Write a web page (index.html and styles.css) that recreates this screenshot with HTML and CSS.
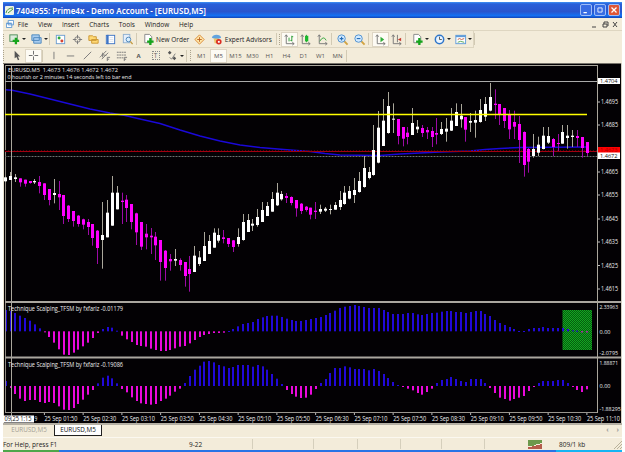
FILE: index.html
```
<!DOCTYPE html>
<html lang="en">
<head>
    <meta charset="UTF-8">
    <title>Prime4x - EURUSD,M5</title>
    <link rel="stylesheet" href="styles.css">
</head>
<body>
    <div class="window">
        <div class="titlebar">
            <svg class="app_icon" viewBox="0 0 9 9"><rect width="9" height="9" rx="1" fill="#eef3e6"/><path d="M1 7Q2 2 8 2M3 7L8 3" stroke="#4d9a43" fill="none"/></svg>
            <span class="title">7404955: Prime4x - Demo Account - [EURUSD,M5]</span>
            <div class="win_btns">
                <svg viewBox="0 0 12 12"><path d="M3 9H7" stroke="#fff" stroke-width="1.5"/></svg>
                <svg viewBox="0 0 12 12"><path d="M3.5 3.5H8.5V8.5H3.5Z" stroke="#fff" fill="none"/></svg>
                <svg class="close" viewBox="0 0 12 12"><path d="M3 3L9 9M9 3L3 9" stroke="#fff" stroke-width="1.5"/></svg>
            </div>
        </div>

        <div class="menubar">
            <svg class="menu_icon" viewBox="0 0 9 9"><path d="M2.5 .5H8.500V5.500H2.500ZM.5 3.500H6.500V8.500H.5Z" fill="#fff" stroke="#5b96d2"/><path d="M1 4H6" stroke="#5b96d2"/></svg>
            <span>File</span><span>View</span><span>Insert</span><span>Charts</span><span>Tools</span><span>Window</span><span>Help</span>
            <svg class="mdi" viewBox="0 0 30 9"><path d="M2 7H6M13 4H17V7H13ZM14 4V2H18V6M23 2L27 7M27 2L23 7" fill="none" stroke="#444"/></svg>
        </div>

        <div class="toolbar main_tools">
            <i class="grip"></i>
            <div class="btn dd"><svg viewBox="0 0 14 14"><rect x="2" y="2" width="8" height="7" fill="#dcebdc" stroke="#4d8d57"/><path d="M8.500 5V12M5 8.500H12" stroke="#16a51c" stroke-width="2.500"/></svg></div>
            <div class="btn dd"><svg viewBox="0 0 14 14"><path d="M2 2H10V8H2ZM4 5H12V11H4Z" fill="#a9cdf0" stroke="#4d87bd"/></svg></div>
            <i class="sep"></i>
            <div class="btn"><svg viewBox="0 0 14 14"><rect x="2.500" y="2.500" width="9" height="9" fill="#fff" stroke="#6d9ed0"/><circle cx="5.500" cy="5.500" r="1.600" fill="#2ea73a"/><circle cx="8.500" cy="8.500" r="1.600" fill="#d64432"/></svg></div>
            <div class="btn"><svg viewBox="0 0 14 14"><circle cx="7" cy="7" r="3" fill="none" stroke="#777"/><path d="M7 2V6M7 8V12M2 7H6M8 7H12" stroke="#777"/></svg></div>
            <div class="btn"><svg viewBox="0 0 14 14"><path d="M2 3H6L7 4H10V8H2ZM5 7H12V11H5Z" fill="#ffd974" stroke="#cb9733"/></svg></div>
            <div class="btn"><svg viewBox="0 0 14 14"><rect x="2.500" y="2.500" width="9" height="9" fill="#fff" stroke="#3f75c5"/><path d="M4 2V12" stroke="#3f75c5" stroke-width="2"/><path d="M6 5H10M6 7H10M6 9H10" stroke="#c9d4e4" stroke-width=".7"/></svg></div>
            <div class="btn"><svg viewBox="0 0 14 14"><rect x="2.500" y="1.500" width="7" height="9" fill="#e4eefa" stroke="#8fafd0"/><circle cx="8" cy="7" r="2.500" fill="#d9efff" stroke="#4c85b9"/><path d="M10 9L12.500 12" stroke="#c39a41" stroke-width="1.500"/></svg></div>
            <i class="sep wide"></i>
            <div class="btn order"><svg viewBox="0 0 14 14"><path d="M3 1.500H8L10.500 4V10.500H3Z" fill="#fff" stroke="#888"/><path d="M9 5.500V13M5.500 9.200H12.500" stroke="#16a51c" stroke-width="2.500"/></svg><span>New Order</span></div>
            <div class="btn"><svg viewBox="0 0 14 14"><path d="M7 2L12 7L7 12L2 7Z" fill="#ffe6a7" stroke="#d98938"/><path d="M7 4.500V9.500M4.500 7H9.500" stroke="#bd6525"/></svg></div>
            <div class="btn expert"><svg viewBox="0 0 14 14"><path d="M2 5Q3 2 7 2T12 5L7 7Z" fill="#62a4df"/><path d="M4 6H9L8 11H5Z" fill="#edc66c"/><circle cx="9.500" cy="9.500" r="3" fill="#dc2e23"/><rect x="8.500" y="8.500" width="2" height="2" fill="#fff"/></svg><span>Expert Advisors</span></div>
            <i class="sep"></i><i class="grip narrow"></i>
            <div class="btn pressed"><svg viewBox="0 0 14 14"><path d="M3.500 2V11.500H12M2 4L3.500 2L5 4M10 10L12 11.500L10 13" fill="none" stroke="#777"/><path d="M6.500 5V9M9.500 3V9M9.500 4H11M8 8H9.500" stroke="#269b31"/></svg></div>
            <div class="btn"><svg viewBox="0 0 14 14"><path d="M3.500 2V11.500H12M2 4L3.500 2L5 4M10 10L12 11.500L10 13" fill="none" stroke="#777"/><path d="M8 2V10" stroke="#269b31"/><rect x="6.500" y="3" width="3.500" height="6" fill="#19b82b"/></svg></div>
            <div class="btn"><svg viewBox="0 0 14 14"><path d="M3.500 2V11.500H12M2 4L3.500 2L5 4M10 10L12 11.500L10 13" fill="none" stroke="#777"/><path d="M4 9Q8 2 11 8" fill="none" stroke="#35a83e"/></svg></div>
            <i class="sep"></i>
            <div class="btn"><svg viewBox="0 0 14 14"><path d="M8 8L12.500 12.500" stroke="#d2a341" stroke-width="2"/><circle cx="6" cy="6" r="4" fill="#d2eaff" stroke="#4d8fce"/><path d="M4 6H8M6 4V8" stroke="#276fb8" stroke-width="1.200"/></svg></div>
            <div class="btn"><svg viewBox="0 0 14 14"><path d="M8 8L12.500 12.500" stroke="#d2a341" stroke-width="2"/><circle cx="6" cy="6" r="4" fill="#d2eaff" stroke="#4d8fce"/><path d="M4 6H8" stroke="#276fb8" stroke-width="1.200"/></svg></div>
            <i class="sep wide"></i>
            <div class="btn pressed"><svg viewBox="0 0 14 14"><path d="M3.500 2V11.500H12M2 4L3.500 2L5 4M10 10L12 11.500L10 13" fill="none" stroke="#777"/><path d="M7 4L11 7L7 10Z" fill="#2fad38"/></svg></div>
            <div class="btn"><svg viewBox="0 0 14 14"><path d="M3.500 2V11.500H12M2 4L3.500 2L5 4M10 10L12 11.500L10 13M8 2V10" fill="none" stroke="#777"/><path d="M12 5L8.500 7L12 9Z" fill="#c73b2e"/></svg></div>
            <i class="sep wide"></i>
            <div class="btn dd"><svg viewBox="0 0 14 14"><path d="M3 1.500H8L10.500 4V10.500H3Z" fill="#fff" stroke="#888"/><path d="M9 5.500V13M5.500 9.200H12.500" stroke="#16a51c" stroke-width="2.500"/></svg></div>
            <div class="btn dd"><svg viewBox="0 0 14 14"><circle cx="7" cy="7" r="4.500" fill="#eaf5ff" stroke="#2f76ca" stroke-width="1.600"/><path d="M7 4V7H9.500" fill="none" stroke="#555"/></svg></div>
            <div class="btn dd"><svg viewBox="0 0 14 14"><rect x="2" y="2.500" width="10.500" height="9" fill="#fff" stroke="#5f9bd8"/><path d="M2 3.500H12.500" stroke="#5f9bd8" stroke-width="2"/><path d="M4 7L6 6L8 7L11 6" fill="none" stroke="#c0593e"/><path d="M4 10L7 9L11 10" fill="none" stroke="#55a653"/></svg></div>
            <i class="sep"></i>
        </div>

        <div class="toolbar line_tools">
            <i class="grip first"></i>
            <div class="btn"><svg viewBox="0 0 14 14"><path d="M5 2V10L7 8.500L8.500 12L10 11.500L8.500 8H11Z" fill="#555"/></svg></div>
            <div class="btn pressed"><svg viewBox="0 0 14 14"><path d="M7 2V6M7 8V12M2 7H6M8 7H12" stroke="#666"/></svg></div>
            <i class="sep"></i>
            <div class="btn"><svg viewBox="0 0 14 14"><path d="M7.500 3V11" stroke="#777"/></svg></div>
            <div class="btn"><svg viewBox="0 0 14 14"><path d="M3 7.500H11" stroke="#777"/></svg></div>
            <div class="btn"><svg viewBox="0 0 14 14"><path d="M3 11L11 3" stroke="#777"/></svg></div>
            <div class="btn"><svg viewBox="0 0 14 14"><path d="M2 9L9 2M4 11L11 4M4 6L9 7M5 4V9M10 9V13M10 9H13M10 11H12" fill="none" stroke="#777"/></svg></div>
            <div class="btn"><svg viewBox="0 0 14 14"><path d="M2 3.500H12M2 6.500H12M2 9.500H9" stroke="#777" stroke-dasharray="2 .6"/><path d="M10 13V9H13M10 11H12" fill="none" stroke="#777"/></svg></div>
            <div class="btn letter">A</div>
            <div class="btn"><div class="text_label">T</div></div>
            <div class="btn dd"><svg viewBox="0 0 14 14"><path d="M2 4L4 2L6 4L4 6ZM7 10L9 8L11 10L9 12Z" fill="#555"/><path d="M4 9L6 11L10 5" fill="none" stroke="#777"/></svg></div>
            <i class="sep wide"></i><i class="grip"></i>
            <div class="btn tf">M1</div><div class="btn tf pressed">M5</div><div class="btn tf">M15</div><div class="btn tf">M30</div><div class="btn tf">H1</div><div class="btn tf">H4</div><div class="btn tf">D1</div><div class="btn tf">W1</div><div class="btn tf">MN</div>
            <i class="sep"></i>
        </div>

        <svg class="chart" id="chart" viewBox="3 63 619 362">
            <defs>
                <pattern id="green_dots" width="2" height="2" patternUnits="userSpaceOnUse">
                    <rect width="2" height="2" fill="#055c0e"/><path d="M0 0H1V1H0ZM1 1H2V2H1Z" fill="#13a522"/>
                </pattern>
            </defs>
            <g id="bars"></g>
            <g id="lines"></g>
            <g id="labels"></g>
        </svg>

        <div class="tabs">
            <span class="tab">EURUSD,M5</span>
            <span class="tab active">EURUSD,M5</span>
            <span class="arrows"><b>‹</b><b>›</b></span>
        </div>

        <div class="status">
            <span class="help">For Help, press F1</span>
            <span class="profile">9-22</span>
            <span class="cell c1"></span><span class="cell c2"></span><span class="cell c3"></span><span class="cell c4"></span><span class="cell c5"></span><span class="cell c6"></span>
            <svg class="signal" viewBox="0 0 15 9"><path d="M1 0V6M3 0V6M5 0V6M7 0V5M9 0V4M11 0V4M13 0V3" stroke="#3f7d1c" stroke-width="1.500"/><path d="M1 7V9M3 7V9M5 6V9M7 6V9M9 5V9M11 5V9M13 4V9" stroke="#a02c1c" stroke-width="1.500"/></svg>
            <span class="traffic">809/1 kb</span>
            <svg class="resize" viewBox="0 0 9 9"><path d="M1 9L9 1M4 9L9 4M7 9L9 7" stroke="#b9b29a"/></svg>
        </div>
    </div>
    <div class="taskbar"><i class="start"></i><i class="tasks"></i><i class="tray"></i></div>

    <script src="chart.js"></script>
</body>
</html>
```
FILE: styles.css
```
* {
    margin: 0;
    padding: 0;
    box-sizing: border-box;
}

body {
    width: 625px;
    height: 452px;
    overflow: hidden;
    padding: 2px 3px 0;
    background-color: #fff;
    font-family: "Open Sans", "Noto Sans", sans-serif;
    font-size: 6.5px;
    color: #222;
}

.window {
    width: 619px;
    height: 448px;
    background-color: #f3ecda;
}

.titlebar {
    height: 16px;
    display: flex;
    align-items: center;
    padding: 0 2px;
    background: linear-gradient(#3f93f5 0, #2a5fd9 12%, #2955cd 60%, #1470f2 85%, #1244b8 100%);
}

.app_icon {
    width: 9px;
    height: 9px;
}

.title {
    margin-left: 2px;
    font-family: "Noto Sans", sans-serif;
    font-size: 8px;
    font-weight: 600;
    color: #fff;
    white-space: nowrap;
}

.win_btns {
    margin-left: auto;
    display: flex;
    gap: 2px;
}

.win_btns svg {
    width: 12px;
    height: 12px;
    border: 1px solid #9dbdf8;
    border-radius: 2px;
    background-color: #386ce3;
}

.win_btns .close {
    background-color: #de5637;
}

.menubar {
    height: 13px;
    display: flex;
    align-items: center;
    gap: 9.8px;
    padding: 0 2px 0 3px;
    border-bottom: 1px solid #ded6c1;
}

.menu_icon {
    width: 8px;
    height: 8px;
    margin-right: -6px;
}

.mdi {
    width: 30px;
    height: 9px;
    margin-left: auto;
}

.toolbar {
    display: flex;
    align-items: center;
    border-bottom: 1px solid #ddd5c0;
}

.main_tools {
    height: 17px;
    width: 471px;
    border-right: 1px solid #ddd5c0;
}

.line_tools {
    height: 15px;
    width: 344px;
    border: none;
}

.grip {
    flex: none;
    width: 3px;
    height: 11px;
    border-left: 1px dotted #aaa28c;
}

.grip.narrow {
    width: 2px;
}

.grip.first {
    width: 5px;
}

.sep {
    flex: none;
    width: 3px;
    height: 12px;
    border-left: 1px solid #d2cab4;
}

.sep.wide {
    width: 4px;
}

.btn {
    flex: none;
    display: flex;
    align-items: center;
    justify-content: center;
    width: 16.8px;
    height: 15px;
    white-space: nowrap;
}

.btn svg {
    flex: none;
    width: 13px;
    height: 13px;
}

.btn.dd {
    width: 21.5px;
    justify-content: flex-start;
    padding-left: 2px;
}

.btn.dd::after {
    content: "";
    margin-left: 1px;
    border: 2px solid transparent;
    border-top-color: #222;
    border-bottom: none;
}

.btn.pressed {
    background-color: #fdfbf4;
    border: 1px solid #ded6c4;
}

.btn.order {
    width: 51px;
    justify-content: flex-start;
    padding-left: 2px;
    gap: 1px;
}

.btn.expert {
    width: 68px;
    justify-content: flex-start;
    padding-left: 2px;
    gap: 2px;
}

.line_tools .btn {
    width: 17px;
    height: 14px;
}

.line_tools .btn.dd {
    width: 22px;
}

.btn.tf,
.btn.letter {
    font-size: 6px;
    color: #555;
}

.btn.letter {
    font-weight: bold;
}

.text_label {
    width: 8px;
    height: 9px;
    line-height: 7px;
    text-align: center;
    border: 1px dotted #888;
    color: #666;
}

.chart {
    display: block;
    width: 619px;
    height: 362px;
    background-color: #030104;
    font-family: "Open Sans", "Noto Sans", sans-serif;
}

.tabs {
    height: 13px;
    display: flex;
    padding-left: 1px;
    border-bottom: 1px solid #fbf8f0;
}

.tab {
    width: 50px;
    height: 11px;
    line-height: 10px;
    text-align: center;
    font-size: 6.3px;
    color: #a39f94;
}

.tab.active {
    width: 48px;
    background-color: #fff;
    border: 1px solid #222;
    border-top: none;
    color: #111;
}

.arrows {
    margin-left: auto;
    display: flex;
    gap: 8px;
    padding-right: 3px;
    line-height: 9px;
    color: #999;
}

.status {
    height: 12px;
    display: flex;
    align-items: center;
}

.help {
    width: 184px;
}

.profile {
    width: 65px;
    padding-left: 2px;
}

.cell {
    height: 10px;
    border-left: 1px solid #d5cfbc;
}

.c1 { width: 61px; }
.c2 { width: 44px; }
.c3 { width: 43px; }
.c4 { width: 41px; }
.c5 { width: 43px; }
.c6 { width: 40px; }

.signal {
    width: 15px;
    height: 9px;
    margin: 0 0 0 4px;
}

.traffic {
    margin-left: 16px;
}

.resize {
    width: 9px;
    height: 9px;
    margin-left: auto;
}

.taskbar {
    display: flex;
    width: 619px;
    height: 2px;
}

.start {
    width: 56px;
    background-color: #4fa64a;
}

.tasks {
    width: 497px;
    background-color: #2873e6;
}

.tray {
    flex: 1;
    background-color: #16b4f3;
}
```
FILE: chart.js
```
// candles: high low bodyTop bodyBottom, in thirds of a pixel below the block's base
// a leading "w" is a rising bar, "m" a falling one
let blocks = [
    { base: 80, rows: `w290 306 292 304,w276 300 288 300,w282 306 292 297,m295 320 295 307,m299 320 299 311,m303 311 303 309,w297 312 303 307,m288 340 306 318,m310 360 310 345,m327 376 327 360,w297 370 339 345,m303 390 342 352,m345 432 345 408,m375 426 377 417,m393 440 393 423,m405 440 407 432,m416 448 418 434,m417 465 426 441,m432 497 432 474,m450 552 452 504,w366 566 465 480,w360 472 398 472,w288 437 338 437,w318 388 338 388,m338 432 362 366,m345 426 359 384,m372 448 372 426,m398 495 400 457,m426 510 426 500,m432 508 461 472,m444 522 467 472,m456 540 470 496` },
    { base: 160, rows: `m240 362 240 306,m270 362 272 324,m282 332 297 304,w267 318 297 302,m295 332 300 315,m306 380 306 348,m288 395 327 342,w258 336 287 336,w273 318 292 312,w216 303 258 303,w225 282 243 282,w205 263 218 263,w205 248 225 242,m210 250 232 237,m234 261 234 252,m240 276 241 261,w205 260 231 252,w162 242 186 240,w162 216 180 216,w177 213 191 197,w147 200 171 195,w126 186 150 186,w126 168 138 168,w96 155 117 155,w69 138 98 136,w93 122 102 118,m99 129 108 114,m109 136 111 129,m120 170 120 145,m129 162 131 153,m138 155 140 150,m143 178 143 164` },
    { base: 75, rows: `m381 432 407 411,w389 417 402 410,w396 411 401 407,w389 418 402 405,w381 404 390 404,w348 405 375 396,w333 389 353 387,w333 373 348 371,w309 384 345 360,w291 353 318 351,w243 338 279 336,w276 313 291 309,w150 302 225 300,w108 265 158 263,w72 213 137 213,w51 176 93 174,w85 174 131 134,m132 208 132 183,m156 214 156 191,m156 208 173 186,w99 180 144 180,w135 174 155 163,m150 186 159 174,m156 192 165 172,m156 216 168 186,m129 208 174 179,w141 180 162 177,w129 200 161 170,w99 168 137 167,w85 153 111 153,w87 158 122 133,m126 200 126 164` },
    { base: 70, rows: `w129 186 153 158,w122 203 150 158,w87 158 120 156,w81 153 102 140,w39 124 81 122,m58 147 101 105,m102 165 102 135,m114 174 114 153,m120 207 134 178,m122 207 156 170,m138 279 162 210,m184 320 186 285,m234 308 237 275,w192 263 237 258,w200 258 224 248,w171 238 197 237,w171 222 198 218,m204 258 207 231,m192 243 219 222,w165 221 186 221,w165 236 197 204,w180 231 197 201,m180 231 198 204,m201 263 201 234,m216 258 216 249` }
];

// histogram ends, thirds of a pixel below 295
let upper = [45,48,54,62,69,77,88,100,112,126,143,163,179,180,173,164,154,143,129,114,102,96,98,107,122,133,141,150,153,155,161,165,168,168,165,160,155,153,145,135,126,120,117,114,114,113,108,102,94,87,84,81,72,67,63,62,62,66,71,75,78,78,75,72,69,66,60,54,47,39,35,33,30,33,36,39,39,39,45,51,57,57,57,54,54,58,60,57,54,53,50,48,48,51,51,54,51,48,48,57,63,75,84,90,96,102,108,108,102,99,99,96,99,99,99,99,102,106,107,112,112];
let lower = [258,279,297,311,318,315,315,321,324,321,324,334,344,345,339,327,314,299,285,265,248,242,250,265,282,292,307,318,325,327,329,327,318,311,302,290,281,264,243,224,212,200,198,202,210,214,219,216,210,210,210,215,210,214,224,237,251,267,285,297,305,309,308,299,282,264,252,234,219,219,214,217,222,222,222,226,222,228,237,249,261,270,276,281,286,294,299,291,281,264,255,252,246,252,258,261,252,252,252,264,279,294,308,312,317,312,308,303,288,276,264,258,258,258,255,255,264,276,285,291,283];

let bars_el = document.getElementById("bars");
let lines_el = document.getElementById("lines");
let labels_el = document.getElementById("labels");

function barX(i) {
    return 5.8 + 4.844 * i;
}

function rect(x, y, w, h, fill) {
    return `<rect x="${x.toFixed(2)}" y="${y.toFixed(2)}" width="${w}" height="${h.toFixed(2)}" fill="${fill}"/>`;
}

function line(x1, y1, x2, y2, color, extra = "") {
    return `<path d="M${x1} ${y1}L${x2} ${y2}" stroke="${color}" fill="none" ${extra}/>`;
}

function text(x, y, value, width, color = "#ececec", size = 6.3) {
    return `<text x="${x}" y="${y}" font-size="${size}" fill="${color}" textLength="${width}" lengthAdjust="spacingAndGlyphs">${value}</text>`;
}

function drawCandles() {
    let out = "";
    let i = 0;
    blocks.forEach(block => {
        block.rows.split(",").forEach(row => {
            let up = row[0] === "w";
            let [high, low, top, bottom] = row.slice(1).split(" ").map(v => block.base + v / 3);
            let x = Math.round(barX(i) - 0.5);
            out += rect(x, high, 1, low - high, up ? "#aaa79b" : "#9c0aa5");
            out += rect(x - 1, top, 3, Math.max(bottom - top, 1), up ? "#fff" : "#f0f");
            i++;
        });
    });
    return out;
}

function drawHistogram(data, zero) {
    return data.map((v, i) => {
        let x = Math.round(barX(i) - 1);
        let top = 295 + Math.min(v, zero) / 3;
        return rect(x, top, 2, Math.max(Math.abs(v - zero) / 3, 1), v > zero ? "#ea08dc" : "#2108d8");
    }).join("");
}

let lines = "";
lines += line(5, 65.5, 598, 65.5, "#aaa69c");
lines += line(5.5, 65, 5.5, 413, "#8f8980");
lines += line(5, 81.5, 598, 81.5, "#aaa");
lines += `<path d="M6 89.700L12 90.300L30 94L50 99L70 104L90 109L110 113L125 115.500L140 119L160 123.500L180 130L200 136L220 141L240 145L260 147.500L290 150L310 151.500L325 153.500L340 155L380 155.500L400 154L420 153L440 152L470 151L485 149.500L500 148.500L520 147.500L587 147" fill="none" stroke="#1a08d8" stroke-width="1.500"/>`;
lines += line(5, 151.5, 598, 151.5, "#a00010");
lines += line(5, 150.5, 598, 150.5, "#550008", 'stroke-dasharray="1 2"');
lines += line(5, 156.5, 598, 156.5, "#6b7370", 'stroke-dasharray="1 .5"');
lines += line(11.5, 65, 11.5, 416, "#aaa69c");
[302, 357.5].forEach(y => lines += line(5, y, 621, y, "#aaa69f", 'stroke-width="2"'));
lines += line(5, 412.5, 598, 412.5, "#99958e");
lines += line(597.5, 65, 597.5, 413, "#aaa69c");
lines += line(3.5, 63, 3.5, 425, "#e6dfcd");
lines += line(3, 63.5, 622, 63.5, "#77736b");
lines += line(621.5, 63, 621.5, 425, "#d5d0c3");
lines += line(3, 424, 622, 424, "#b5b0a4", 'stroke-width="2"');

let labels = "";
labels += text(8, 72.3, "EURUSD,M5&#160; 1.4673 1.4676 1.4672 1.4672", 110, "#ececec", 5.8);
labels += text(7.5, 79.3, "0 hourish or 2 minutes 14 seconds left to bar end", 124, "#ececec", 5.8);
labels += text(8, 311.3, "Technique Scalping_TFSM by fxfariz -0.01179", 115);
labels += text(8, 367, "Technique Scalping_TFSM by fxfariz -0.19086", 115);
[[1.4695, 102], [1.4685, 125], [1.4665, 172], [1.4655, 195], [1.4645, 219], [1.4635, 242], [1.4625, 265.5], [1.4615, 289]].forEach(([price, y]) => {
    labels += line(598, y, 600, y, "#bbb") + text(601, y + 2.3, price, 17);
});
[["2.33963", 309], ["0.00", 333.7], ["-2.0795", 355.3], ["1.88871", 365.3], ["0.00", 388.3], ["-1.88295", 411]].forEach(([value, y]) => {
    labels += text(599.5, y, value, value.length > 4 ? value.length * 2.65 : 11, "#ececec", 5.8);
});
labels += rect(598, 78, 22, 6, "#fff") + text(600, 83.2, "1.4704", 17.5, "#111", 6);
labels += rect(598, 147, 22, 6, "#f00") + text(600, 152, "1.4673", 17.5, "#a00", 5.4);
labels += rect(598, 152.5, 22, 6.5, "#fff") + text(600, 158, "1.4672", 17.5, "#111", 6);

for (let i = 0; i < 15; i++) {
    let x = 44.4 + 38.75 * i;
    let minutes = 110 + 40 * i;
    let time = String(Math.floor(minutes / 60)).padStart(2, "0") + ":" + String(minutes % 60).padStart(2, "0");
    labels += line(x, 413, x, 415, "#bbb") + text(x, 420.8, "25 Sep " + time, 33);
}
labels += rect(3, 415.5, 31, 7, "#fff") + line(11.5, 415, 11.5, 422, "#ccc");
labels += text(4.5, 421, "09.25 1:15", 27, "#111") + text(34.5, 421, "9", 2.8);

bars_el.innerHTML = rect(562.5, 310, 29.5, 40, "url(#green_dots)") + drawHistogram(upper, 109) + drawHistogram(lower, 273);
lines_el.innerHTML = lines + drawCandles() + line(5, 114.5, 587, 114.5, "#ff0", 'stroke-width="1.500"');
labels_el.innerHTML = labels;
```
